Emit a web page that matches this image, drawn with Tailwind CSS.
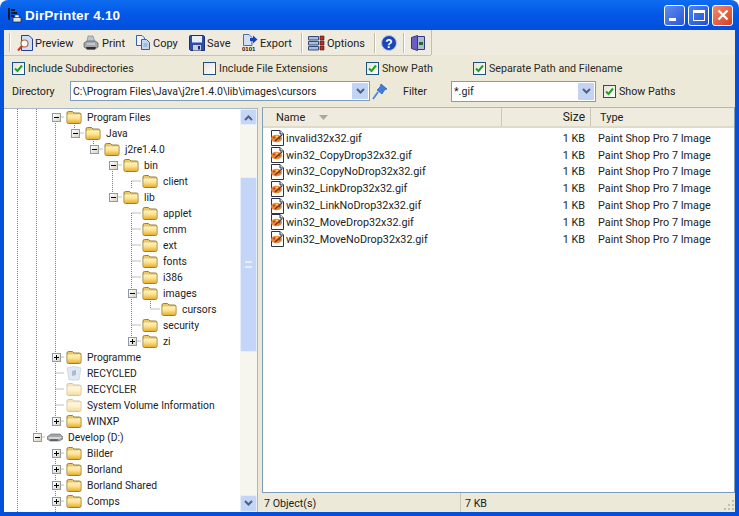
<!DOCTYPE html>
<html lang="en">
<head>
<meta charset="UTF-8">
<title>DirPrinter 4.10</title>
<script src="https://cdn.jsdelivr.net/npm/@tailwindcss/browser@4"></script>
</head>
<body class="bg-white overflow-hidden [font-family:'Roboto',sans-serif] text-[10.7px] leading-[13px] text-[#222]">

<!-- shared icons -->
<svg class="absolute w-0 h-0">
  <defs>
    <linearGradient id="foldergrad" x1="0" y1="0" x2="0" y2="1">
      <stop offset="0" stop-color="#fff3c0"/>
      <stop offset=".45" stop-color="#fce38e"/>
      <stop offset="1" stop-color="#e8ae35"/>
    </linearGradient>
  </defs>
  <symbol id="folder" viewBox="0 0 16 16">
    <path d="M1 4 Q1 2.5 2.5 2.5 H6.5 L8 4 H13.5 Q15 4 15 5.5 V13 Q15 14.5 13.5 14.5 H2.5 Q1 14.5 1 13 Z" fill="#e9c765" stroke="#97803c"/>
    <path d="M1.5 6.5 Q1.5 5.5 2.5 5.5 H13.5 Q14.5 5.5 14.5 6.5 V13 Q14.5 14 13.5 14 H2.5 Q1.5 14 1.5 13 Z" fill="url(#foldergrad)"/>
  </symbol>
  <symbol id="gif" viewBox="0 0 15 16">
    <path d="M1.5 .5 H10 L13.5 4 V15.5 H1.5 Z" fill="#fff" stroke="#2c3347"/>
    <path d="M10 .5 V4 H13.5" fill="#dde" stroke="#2c3347"/>
    <ellipse cx="6.5" cy="8.5" rx="5.5" ry="3.8" fill="#e8863a"/>
    <circle cx="4" cy="7.5" r="1" fill="#d42a1c"/>
    <circle cx="7" cy="6.5" r="1" fill="#f6e04e"/>
    <circle cx="9.5" cy="8.5" r="1" fill="#3a63c4"/>
    <path d="M5 11 L12 5" stroke="#6b3310" stroke-width="1.3"/>
  </symbol>
</svg>

<div class="flex flex-col w-[739px] h-[516px]">

  <!-- title bar -->
  <div class="flex items-center h-[30px] shrink-0 rounded-t-lg bg-linear-to-b from-[#0f6cf0] via-[#0357e6] to-[#0250dc] pl-[7px] pr-[6px]">
    <svg class="w-[15px] h-[16px] mr-[3px]" viewBox="0 0 15 16">
      <path d="M1 1 H3 V13 H1 Z M4 2 H8 V4 H4 Z M4 5 H10 V7 H4 Z M4 8 H7 V10 H4 Z" fill="#141a28"/>
      <path d="M6 10.5 H14 V15 H6 Z" fill="#dfe2e6" stroke="#2a2f3a" stroke-width=".8"/>
      <path d="M8 8 H12 V10.5 H8 Z" fill="#fff" stroke="#2a2f3a" stroke-width=".5"/>
    </svg>
    <span class="text-white font-bold text-[13.5px] tracking-[.2px] [font-family:'Liberation_Sans',sans-serif]">DirPrinter 4.10</span>
    <div class="flex gap-[3px] ml-auto">
      <div class="w-[21px] h-[21px] rounded-[3px] border border-white bg-linear-to-br from-[#5f8cf0] to-[#2b55d8] flex items-end pl-[4px] pb-[4px]">
        <div class="w-[7px] h-[3px] bg-white"></div>
      </div>
      <div class="w-[21px] h-[21px] rounded-[3px] border border-white bg-linear-to-br from-[#4f80f0] to-[#2350d8] flex items-center justify-center">
        <div class="w-[12px] h-[11px] border border-white border-t-[3px]"></div>
      </div>
      <div class="w-[21px] h-[21px] rounded-[3px] border border-white bg-linear-to-br from-[#ee8a6c] to-[#d43d1e] flex items-center justify-center">
        <svg class="w-[12px] h-[12px]" viewBox="0 0 12 12"><path d="M1.5 1.5 L10.5 10.5 M10.5 1.5 L1.5 10.5" stroke="#fff" stroke-width="2.2"/></svg>
      </div>
    </div>
  </div>

  <!-- client area inside the blue frame -->
  <div class="flex-1 min-h-0 flex flex-col bg-[#0250dc] px-[4px] pb-[4px]">
    <div class="flex-1 min-h-0 flex flex-col bg-[#ece9d8]">

      <!-- toolbar -->
      <div class="flex items-center h-[25px] shrink-0 bg-[#efebde] text-[11px]">
        <div class="w-[2px] h-[19px] ml-[5px] mr-[6px] border-x border-l-[#c2bea9] border-r-white"></div>
        <div class="flex items-center w-[66px]">
          <svg class="w-[17px] h-[18px] mr-[1px]" viewBox="0 0 17 18">
            <path d="M4.5 1.5 H12 L15.5 5 V16.5 H4.5 Z" fill="#cfe0f6" stroke="#25418e"/>
            <circle cx="7.5" cy="9.5" r="3.5" fill="#fff" stroke="#b8663a" stroke-width="1.2"/>
            <path d="M5 12 L1 16.5" stroke="#c0392b" stroke-width="2"/>
          </svg>
          <span class="mt-[2px]">Preview</span>
        </div>
        <div class="flex items-center w-[52px]">
          <svg class="w-[16px] h-[16px] mr-[3px]" viewBox="0 0 16 16">
            <path d="M5 1 H10 L12 7 H4 Z" fill="#b9c4d2" stroke="#7c8798" stroke-width=".7"/>
            <path d="M1 8 L4 6 H12 L15 8 V12 L12 14 H4 L1 12 Z" fill="#a6a9ab" stroke="#55585c" stroke-width=".7"/>
            <path d="M3 12 H13 L12 14.5 H4 Z" fill="#2e3033"/>
            <path d="M4 9 H12" stroke="#e2e4e6"/>
          </svg>
          <span class="mt-[2px]">Print</span>
        </div>
        <div class="flex items-center w-[54px]">
          <svg class="w-[16px] h-[17px] mr-[2px]" viewBox="0 0 16 17">
            <path d="M1.5 1.5 H7 L9.5 4 V11.5 H1.5 Z" fill="#eef3fb" stroke="#3e5f9e"/>
            <path d="M6.5 5.5 H11.5 L14.5 8.5 V15.5 H6.5 Z" fill="#c3d7f3" stroke="#3e5f9e"/>
            <path d="M8.5 10 H12.5 M8.5 12 H12.5" stroke="#7d9bcc"/>
          </svg>
          <span class="mt-[2px]">Copy</span>
        </div>
        <div class="flex items-center w-[53px]">
          <svg class="w-[16px] h-[16px] mr-[2px]" viewBox="0 0 16 16">
            <path d="M.5 1.5 Q.5 .5 1.5 .5 H14.5 L15.5 1.5 V15.5 H1.5 L.5 14.5 Z" fill="#2e4ea6" stroke="#1b2f72"/>
            <path d="M3 1 H13 V7.5 H3 Z" fill="#e8edf6"/>
            <path d="M4 10 H12 V15.5 H4 Z" fill="#c8cedb"/>
            <path d="M9 11 H11 V14.5 H9 Z" fill="#1b2f72"/>
          </svg>
          <span class="mt-[2px]">Save</span>
        </div>
        <div class="flex items-center w-[59px]">
          <svg class="w-[16px] h-[18px] mr-[2px]" viewBox="0 0 16 18">
            <path d="M1.5 .5 H7 L10 3.5 V11.5 H1.5 Z" fill="#d2e0f5" stroke="#4d6ba8"/>
            <path d="M8 4 H11 V1.5 L15.5 5.5 L11 9.5 V7 H8 Z" fill="#1c3fc0"/>
            <text x="0" y="17" font-size="6" font-weight="700" fill="#111" font-family="Liberation Sans">0101</text>
          </svg>
          <span class="mt-[2px]">Export</span>
        </div>
        <div class="w-[2px] h-[20px] mr-[5px] border-x border-l-[#c2bea9] border-r-white"></div>
        <div class="flex items-center w-[66px]">
          <svg class="w-[17px] h-[16px] mr-[2px]" viewBox="0 0 17 16">
            <path d="M.5 1.5 H10.5 V5 H.5 Z M.5 6.5 H10.5 V10 H.5 Z M.5 11.5 H10.5 V15 H.5 Z" fill="#a8bde0" stroke="#3a4d78"/>
            <path d="M12 1 H16 V5 H12 Z M12 6 H16 V10 H12 Z M12 11 H16 V15 H12 Z" fill="#c02a1f" stroke="#3a2020" stroke-width=".6"/>
          </svg>
          <span class="mt-[2px]">Options</span>
        </div>
        <div class="w-[2px] h-[20px] mr-[5px] border-x border-l-[#c2bea9] border-r-white"></div>
        <div class="flex items-center w-[22px]">
          <svg class="w-[16px] h-[16px]" viewBox="0 0 16 16">
            <circle cx="8" cy="8" r="7.5" fill="#1c46b8"/>
            <circle cx="8" cy="8" r="7.5" fill="none" stroke="#b8c6e8"/>
            <text x="8" y="12.5" text-anchor="middle" font-size="12" font-weight="700" fill="#fff" font-family="Liberation Sans">?</text>
          </svg>
        </div>
        <div class="w-[2px] h-[20px] mr-[6px] border-x border-l-[#c2bea9] border-r-white"></div>
        <div class="flex items-center w-[20px]">
          <svg class="w-[14px] h-[16px]" viewBox="0 0 14 16">
            <path d="M.5 2.5 L6.5 .5 V15.5 L.5 13.5 Z" fill="#6a5fc0" stroke="#3b3580"/>
            <path d="M6.5 1.5 H13.5 V14.5 H6.5 Z" fill="#aebbd6" stroke="#3b3580"/>
            <path d="M8 7 H12 V10 H8 Z" fill="#1f6b2a"/>
          </svg>
        </div>
        <div class="w-[1px] h-[25px] bg-[#c2bea9]"></div>
      </div>
      <div class="h-[1px] shrink-0 w-[427px] bg-[#c8c4b0]"></div>

      <!-- option rows -->
      <div class="flex items-center h-[24px] shrink-0 text-[#2a2a2a]" id="row1">
        <label class="flex items-center w-[191px] ml-[8px] gap-[3px]"><span data-check="1"></span>Include Subdirectories</label>
        <label class="flex items-center w-[163px] gap-[3px]"><span data-check="0"></span>Include File Extensions</label>
        <label class="flex items-center w-[107px] gap-[3px]"><span data-check="1"></span>Show Path</label>
        <label class="flex items-center gap-[3px]"><span data-check="1"></span>Separate Path and Filename</label>
      </div>
      <div class="flex items-center h-[22px] shrink-0">
        <span class="w-[58px] ml-[8px]">Directory</span>
        <div class="flex items-center w-[300px] h-[20px] border border-[#7f9db9] bg-white pl-[2px] pr-[1px]">
          <span class="flex-1 text-[10.5px]">C:\Program Files\Java\j2re1.4.0\lib\images\cursors</span>
          <div class="w-[16px] h-[16px] bg-[#c3d3f4] flex items-center justify-center rounded-[1px]">
            <svg class="w-[9px] h-[7px]" viewBox="0 0 9 7"><path d="M1 1 L4.5 4.5 L8 1" fill="none" stroke="#4d6185" stroke-width="2"/></svg>
          </div>
        </div>
        <svg class="w-[16px] h-[17px] ml-[2px]" viewBox="0 0 16 17">
          <path d="M9 1 L15 6 L12.5 7 L10 11 L5 7 L8 4 Z" fill="#3f7fdc" stroke="#1f4da8" stroke-width=".6"/>
          <path d="M6 9 L1 16" stroke="#4f8ae0" stroke-width="2"/>
        </svg>
        <span class="w-[48px] ml-[15px]">Filter</span>
        <div class="flex items-center w-[145px] h-[21px] border border-[#7f9db9] bg-white pl-[2px] pr-[1px]">
          <span class="flex-1">*.gif</span>
          <div class="w-[16px] h-[17px] bg-[#c3d3f4] flex items-center justify-center rounded-[1px]">
            <svg class="w-[9px] h-[7px]" viewBox="0 0 9 7"><path d="M1 1 L4.5 4.5 L8 1" fill="none" stroke="#4d6185" stroke-width="2"/></svg>
          </div>
        </div>
        <label class="flex items-center gap-[3px] ml-[7px]"><span data-check="1"></span>Show Paths</label>
      </div>

      <!-- tree and file list -->
      <div class="flex-1 min-h-0 flex pt-[6px] gap-[4px] mt-[-1px]">

        <div class="w-[254px] shrink-0 flex mt-[1px] bg-white relative border-r border-t border-[#a9b8c8]">
          <svg class="absolute left-0 top-0 w-[236px] h-[403px] pointer-events-none" viewBox="0 0 236 403" fill="none" stroke="#808080" stroke-dasharray="1 1">
            <!-- x is measured from the panel, the frame is 4px wide -->
            <path d="M13.5 0 V403 M32.5 0 V328 M51.5 8 V312 M51.5 344 V403"/>
            <path d="M70.5 8 V24 M89.5 24 V40 M108.5 56 V88 M127.5 72 V80 M127.5 104 V232 M146.5 184 V200"/>
            <path d="M51.5 8 H60 M70.5 24 H80 M89.5 40 H99 M108.5 56 H118 M108.5 88 H118 M127.5 72 H137"/>
            <path d="M127.5 104 H137 M127.5 120 H137 M127.5 136 H137 M127.5 152 H137 M127.5 168 H137 M127.5 184 H137 M146.5 200 H156 M127.5 216 H137 M127.5 232 H137"/>
            <path d="M51.5 248 H60 M51.5 264 H60 M51.5 280 H60 M51.5 296 H60 M51.5 312 H60 M32.5 328 H41 M51.5 344 H60 M51.5 360 H60 M51.5 376 H60 M51.5 392 H60"/>
          </svg>
          <div id="tree" class="relative flex-1 min-w-0 overflow-hidden text-[10.3px]"></div>
          <!-- scrollbar -->
          <div class="w-[17px] shrink-0 flex flex-col bg-[#f6f5ee]">
            <div class="h-[16px] rounded-[2px] bg-[#c5d5f6] border border-[#e6edfc] flex items-center justify-center">
              <svg class="w-[9px] h-[7px]" viewBox="0 0 9 7"><path d="M1 6 L4.5 2.5 L8 6" fill="none" stroke="#4d6185" stroke-width="2"/></svg>
            </div>
            <div class="h-[52px]"></div>
            <div class="h-[175px] rounded-[2px] bg-[#c5d5f8] border border-[#e6edfc] flex items-center justify-center">
              <div class="w-[7px] h-[7px] border-y-2 border-[#e8eefc]"></div>
            </div>
            <div class="flex-1"></div>
            <div class="h-[17px] rounded-[2px] bg-[#c5d5f6] border border-[#e6edfc] flex items-center justify-center">
              <svg class="w-[9px] h-[7px]" viewBox="0 0 9 7"><path d="M1 1 L4.5 4.5 L8 1" fill="none" stroke="#4d6185" stroke-width="2"/></svg>
            </div>
          </div>
        </div>

        <div class="flex-1 min-w-0 flex flex-col">
          <div class="flex-1 min-h-0 flex flex-col bg-white border border-[#7f9db9] border-t-[#a9b8c8]">
            <div class="flex items-center h-[20px] shrink-0 bg-[#efecdf] border-b-2 border-[#dedbc9] text-[11px]">
              <div class="w-[239px] pl-[13px] flex items-center h-full border-r border-[#cbc7b8]">
                Name
                <svg class="w-[9px] h-[5px] ml-[14px]" viewBox="0 0 9 5"><path d="M0 0 H9 L4.5 5 Z" fill="#aca899"/></svg>
              </div>
              <div class="w-[89px] pr-[5px] text-right h-full flex items-center justify-end border-r border-[#cbc7b8] text-[12px]">Size</div>
              <div class="pl-[9px]">Type</div>
            </div>
            <div id="files" class="pt-[2px] text-[10.8px]"></div>
          </div>
          <div class="flex items-center h-[19px] shrink-0 relative">
            <div class="w-[199px] h-full flex items-center pl-[2px] border-r border-[#cbc7b8]"><span class="mt-[2px]">7 Object(s)</span></div>
            <div class="pl-[4px] mt-[2px]">7 KB</div>
            <svg class="absolute right-[0px] bottom-[1px] w-[11px] h-[11px]" viewBox="0 0 11 11" fill="#c4c0ab">
              <path d="M8 0 H10 V2 H8 Z M4 4 H6 V6 H4 Z M8 4 H10 V6 H8 Z M0 8 H2 V10 H0 Z M4 8 H6 V10 H4 Z M8 8 H10 V10 H8 Z"/>
            </svg>
          </div>
        </div>

      </div>
    </div>
  </div>
</div>

<script>
  // [level, name, expander, icon]
  const treeRows = [
    [1, "Program Files", "-"],
    [2, "Java", "-"],
    [3, "j2re1.4.0", "-"],
    [4, "bin", "-"],
    [5, "client"],
    [4, "lib", "-"],
    [5, "applet"],
    [5, "cmm"],
    [5, "ext"],
    [5, "fonts"],
    [5, "i386"],
    [5, "images", "-"],
    [6, "cursors"],
    [5, "security"],
    [5, "zi", "+"],
    [1, "Programme", "+"],
    [1, "RECYCLED", "", "bin"],
    [1, "RECYCLER", "", "pale"],
    [1, "System Volume Information", "", "pale"],
    [1, "WINXP", "+"],
    [0, "Develop (D:)", "-", "drive"],
    [1, "Bilder", "+"],
    [1, "Borland", "+"],
    [1, "Borland Shared", "+"],
    [1, "Comps", "+"]
  ];

  const files = [
    "invalid32x32.gif",
    "win32_CopyDrop32x32.gif",
    "win32_CopyNoDrop32x32.gif",
    "win32_LinkDrop32x32.gif",
    "win32_LinkNoDrop32x32.gif",
    "win32_MoveDrop32x32.gif",
    "win32_MoveNoDrop32x32.gif"
  ];

  function expander(sign) {
    if (!sign) return '<span class="w-[9px] h-[9px] shrink-0"></span>';
    const bar = sign === "+" ? '<span class="absolute left-[3px] top-[1px] w-[1px] h-[5px] bg-black"></span>' : '';
    return `<span class="relative w-[9px] h-[9px] shrink-0 border border-[#8d9aa8] bg-linear-to-br from-white to-[#d8d4c4]">
      <span class="absolute left-[1px] top-[3px] w-[5px] h-[1px] bg-black"></span>${bar}</span>`;
  }

  function treeIcon(kind) {
    if (kind === "drive") {
      return `<svg class="w-[16px] h-[16px] shrink-0" viewBox="0 0 16 16">
        <path d="M0 8 L4 5 H13 L16 8 V10 L12 12 H3 L0 10 Z" fill="#a4a6a8" stroke="#5f6164" stroke-width=".6"/>
        <path d="M1 8 H12 L15.5 8 L12 10 H3 Z" fill="#d6d8da"/>
        <path d="M3 11 H11" stroke="#2e3032"/></svg>`;
    }
    if (kind === "bin") {
      return `<svg class="w-[16px] h-[16px] shrink-0" viewBox="0 0 16 16">
        <path d="M1 3 Q8 0 15 3 L13 15 H3 Z" fill="#dfe9f4" stroke="#c3d1e0" stroke-width=".7"/>
        <path d="M6 6 L10 5 L10 10 L6 11 Z" fill="#a9bcd2"/></svg>`;
    }
    const pale = kind === "pale" ? " opacity-45" : "";
    return `<svg class="w-[16px] h-[16px] shrink-0${pale}"><use href="#folder"/></svg>`;
  }

  document.getElementById("tree").innerHTML = treeRows.map(([level, name, sign, icon]) =>
    `<div class="flex items-center h-[16px] whitespace-nowrap" style="padding-left:${29 + 19 * level}px">
      ${expander(sign)}<span class="w-[5px] shrink-0"></span>${treeIcon(icon)}<span class="ml-[5px]">${name}</span>
    </div>`).join("");

  document.getElementById("files").innerHTML = files.map(name =>
    `<div class="flex items-center h-[16.8px] whitespace-nowrap">
      <svg class="w-[15px] h-[16px] ml-[7px] mr-[1px] shrink-0"><use href="#gif"/></svg>
      <span class="w-[262px]">${name}</span>
      <span class="w-[37px] text-right">1 KB</span>
      <span class="ml-[13px]">Paint Shop Pro 7 Image</span>
    </div>`).join("");

  document.querySelectorAll("[data-check]").forEach(el => {
    el.className = "w-[13px] h-[13px] shrink-0 border border-[#1c5180] bg-linear-to-br from-[#e4e2d8] to-white flex items-center justify-center";
    if (el.dataset.check === "1") {
      el.innerHTML = '<svg class="w-[9px] h-[9px]" viewBox="0 0 9 9"><path d="M1 4.5 L3.5 7 L8 1.5" fill="none" stroke="#21a121" stroke-width="2"/></svg>';
    }
  });
</script>
</body>
</html>
